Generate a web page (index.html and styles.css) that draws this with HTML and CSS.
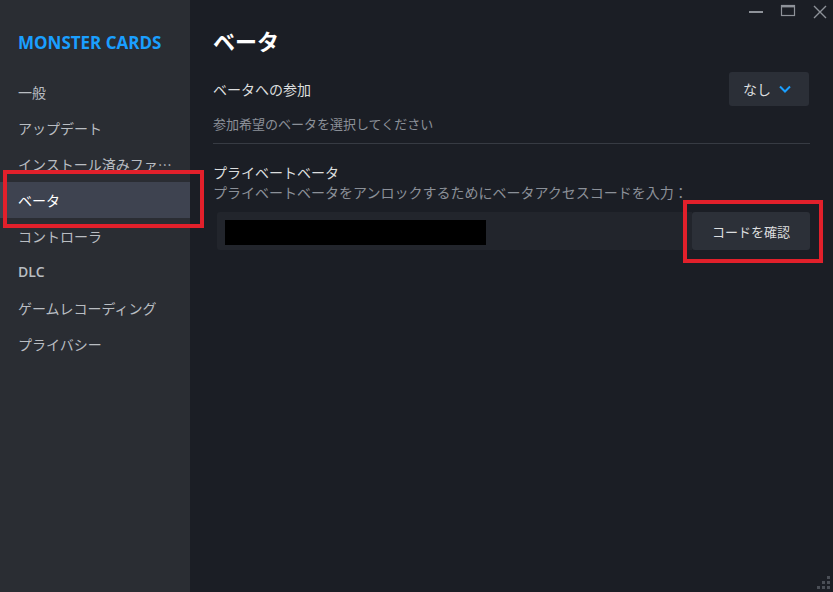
FILE: index.html
```html
<!DOCTYPE html>
<html lang="ja">
<head>
    <meta charset="UTF-8">
    <meta name="viewport" content="width=device-width, initial-scale=1.0">
    <title>MONSTER CARDS - ベータ</title>
    <link rel="stylesheet" href="styles.css">
</head>
<body>
    <div class="window">
        <aside class="sidebar">
            <div class="game-title">MONSTER CARDS</div>
            <nav class="nav">
                <div class="nav-item">一般</div>
                <div class="nav-item">アップデート</div>
                <div class="nav-item">インストール済みファイル</div>
                <div class="nav-item active">
                    ベータ
                    <span class="mark mark-nav"></span>
                </div>
                <div class="nav-item">コントローラ</div>
                <div class="nav-item latin">DLC</div>
                <div class="nav-item">ゲームレコーディング</div>
                <div class="nav-item">プライバシー</div>
            </nav>
        </aside>

        <main class="content">
            <div class="titlebar">
                <svg class="win-btn" width="16" height="16" viewBox="0 0 16 16">
                    <rect x="1" y="8" width="14" height="2" fill="#8e9299"/>
                </svg>
                <svg class="win-btn" width="16" height="16" viewBox="0 0 16 16">
                    <rect x="1.5" y="2.5" width="13" height="10" fill="none" stroke="#8e9299" stroke-width="1.2"/>
                    <rect x="1" y="2" width="14" height="2.4" fill="#8e9299"/>
                </svg>
                <svg class="win-btn" width="16" height="16" viewBox="0 0 16 16">
                    <path d="M2 3 L14 15 M14 3 L2 15" stroke="#8e9299" stroke-width="1.4" fill="none"/>
                </svg>
            </div>

            <h1 class="page-title">ベータ</h1>

            <div class="setting-row">
                <div class="setting-label">ベータへの参加</div>
                <div class="dropdown">
                    <span>なし</span>
                    <svg width="12" height="10" viewBox="0 0 12 10">
                        <path d="M1 2.5 L6 7.5 L11 2.5" stroke="#1a9fff" stroke-width="2" fill="none"/>
                    </svg>
                </div>
            </div>
            <div class="setting-desc">参加希望のベータを選択してください</div>
            <div class="divider"></div>

            <div class="setting-label private-label">プライベートベータ</div>
            <div class="setting-desc private-desc">プライベートベータをアンロックするためにベータアクセスコードを入力：</div>

            <div class="code-row">
                <div class="code-field">
                    <div class="redacted"></div>
                </div>
                <div class="code-btn">
                    コードを確認
                    <span class="mark mark-btn"></span>
                </div>
            </div>

            <svg class="grip" width="14" height="14" viewBox="0 0 14 14">
                <rect x="10" y="0" width="3" height="3" fill="#4a4e56"/>
                <rect x="5" y="5" width="3" height="3" fill="#4a4e56"/>
                <rect x="10" y="5" width="3" height="3" fill="#4a4e56"/>
                <rect x="0" y="10" width="3" height="3" fill="#4a4e56"/>
                <rect x="5" y="10" width="3" height="3" fill="#4a4e56"/>
                <rect x="10" y="10" width="3" height="3" fill="#4a4e56"/>
            </svg>
        </main>
    </div>
</body>
</html>
```

FILE: styles.css
```css
body {
    margin: 0;
    padding: 0;
    background-color: #1b1e25;
    font-family: "Noto Sans CJK JP", "Noto Sans", sans-serif;
    overflow: hidden;
}

.window {
    display: flex;
    width: 833px;
    height: 592px;
}

/* Sidebar */
.sidebar {
    width: 190px;
    flex-shrink: 0;
    background-color: #2a2d33;
    padding-top: 31px;
}

.game-title {
    padding-left: 18px;
    color: #1a9fff;
    font-family: "Open Sans", "Noto Sans", sans-serif;
    font-weight: 700;
    font-size: 17px;
    line-height: 24px;
    height: 43px;
    white-space: nowrap;
}

.nav-item {
    position: relative;
    height: 36px;
    line-height: 36px;
    padding-left: 18px;
    padding-right: 12px;
    color: #b9bdc2;
    font-size: 14px;
    white-space: nowrap;
    overflow: hidden;
    text-overflow: ellipsis;
}

.nav-item.latin {
    font-family: "Open Sans", "Noto Sans", sans-serif;
    font-weight: 600;
    font-size: 14px;
}

.nav-item.active {
    background-color: #3e4350;
    color: #ffffff;
    overflow: visible;
}

/* Red annotation boxes */
.mark {
    position: absolute;
    border: 4px solid #e2202b;
    box-sizing: border-box;
    pointer-events: none;
}

.mark-nav {
    left: 3px;
    top: -12px;
    width: 201px;
    height: 58px;
}

.mark-btn {
    left: -9px;
    top: -12px;
    right: -13px;
    bottom: -13px;
}

/* Content */
.content {
    position: relative;
    flex: 1;
    padding: 0 23px;
}

.titlebar {
    position: absolute;
    top: 3px;
    right: 5px;
    display: flex;
    gap: 16px;
}

.page-title {
    margin: 0;
    padding-top: 25px;
    color: #ffffff;
    font-size: 22px;
    font-weight: 700;
    line-height: 30px;
    height: 47px;
}

.setting-row {
    display: flex;
    justify-content: space-between;
    align-items: center;
    height: 34px;
}

.setting-label {
    color: #dcdedf;
    font-size: 14px;
    line-height: 20px;
}

.dropdown {
    display: flex;
    align-items: center;
    gap: 8px;
    height: 34px;
    margin-right: 1px;
    padding: 0 18px 0 14px;
    background-color: #2b2f37;
    border-radius: 3px;
    color: #dcdedf;
    font-size: 14px;
}

.setting-desc {
    color: #8b9098;
    font-size: 13px;
    line-height: 18px;
    margin-top: 9px;
}

.divider {
    height: 1px;
    background-color: #373b43;
    margin-top: 10px;
}

.private-label {
    margin-top: 18px;
}

.private-desc {
    font-size: 14px;
    line-height: 20px;
    margin-top: 0;
}

.code-row {
    display: flex;
    margin-top: 10px;
    margin-left: 4px;
    height: 38px;
}

.code-field {
    flex: 1;
    background-color: #22252c;
    border-radius: 3px 0 0 3px;
    padding: 8px;
}

.redacted {
    width: 261px;
    height: 25px;
    background-color: #000000;
}

.code-btn {
    position: relative;
    width: 118px;
    display: flex;
    align-items: center;
    justify-content: center;
    background-color: #2c3038;
    border-radius: 3px;
    color: #dcdedf;
    font-size: 13px;
}

.grip {
    position: absolute;
    right: 2px;
    bottom: 2px;
}
```
